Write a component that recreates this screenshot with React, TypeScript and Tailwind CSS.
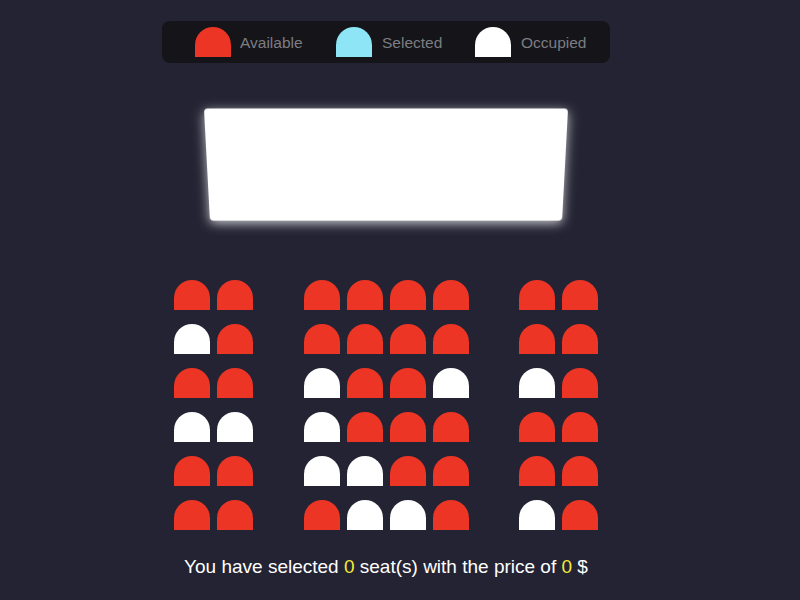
import React from "react";

const layout: string[] = [
  "........",
  "O.......",
  "..O..OO.",
  "OOO.....",
  "..OO....",
  "...OO.O.",
];

function Seat({ kind }: { kind: "a" | "s" | "o" }) {
  const color =
    kind === "o" ? "bg-white" : kind === "s" ? "bg-[#8de5f5]" : "bg-[#ec3524]";
  return <div className={`w-[36px] h-[30px] rounded-t-[24px] ${color}`} />;
}

export default function App() {
  return (
    <div
      className="w-[800px] h-[600px] bg-[#242333] flex flex-col items-center pr-[28px] overflow-hidden"
      style={{ fontFamily: '"Liberation Sans", Arial, sans-serif' }}
    >
      <div className="mt-[21px] h-[42px] w-[448px] rounded-[8px] bg-[#141419] flex items-center pl-[33px]">
        <div className="w-[141px] flex items-center">
          <Seat kind="a" />
          <span className="ml-[9px] mt-[2px] text-[15.5px] text-[#7d7d82]">Available</span>
        </div>
        <div className="w-[139px] flex items-center">
          <Seat kind="s" />
          <span className="ml-[10px] mt-[2px] text-[15.5px] text-[#7d7d82]">Selected</span>
        </div>
        <div className="flex items-center">
          <Seat kind="o" />
          <span className="ml-[10px] mt-[2px] text-[15.5px] text-[#7d7d82]">Occupied</span>
        </div>
      </div>

      <div className="mt-[44px] h-[117px] w-[358px] bg-white rounded-[4px] shadow-[0_3px_12px_rgba(255,255,255,0.75)] [transform:perspective(1000px)_rotateX(-16.6deg)]" />

      <div className="mt-[56px] flex flex-col gap-[14px]">
        {layout.map((row, r) => (
          <div key={r} className="flex gap-[7px]">
            {row.split("").map((c, i) => (
              <div
                key={i}
                className={i === 1 ? "mr-[44px]" : i === 5 ? "mr-[43px]" : ""}
              >
                <Seat kind={c === "O" ? "o" : "a"} />
              </div>
            ))}
          </div>
        ))}
      </div>

      <p className="mt-[26px] text-[19px] leading-[22px] text-white">
        You have selected <span className="text-[#f2e937]">0</span> seat(s) with the
        price of <span className="text-[#f2e937]">0</span> $
      </p>
    </div>
  );
}
